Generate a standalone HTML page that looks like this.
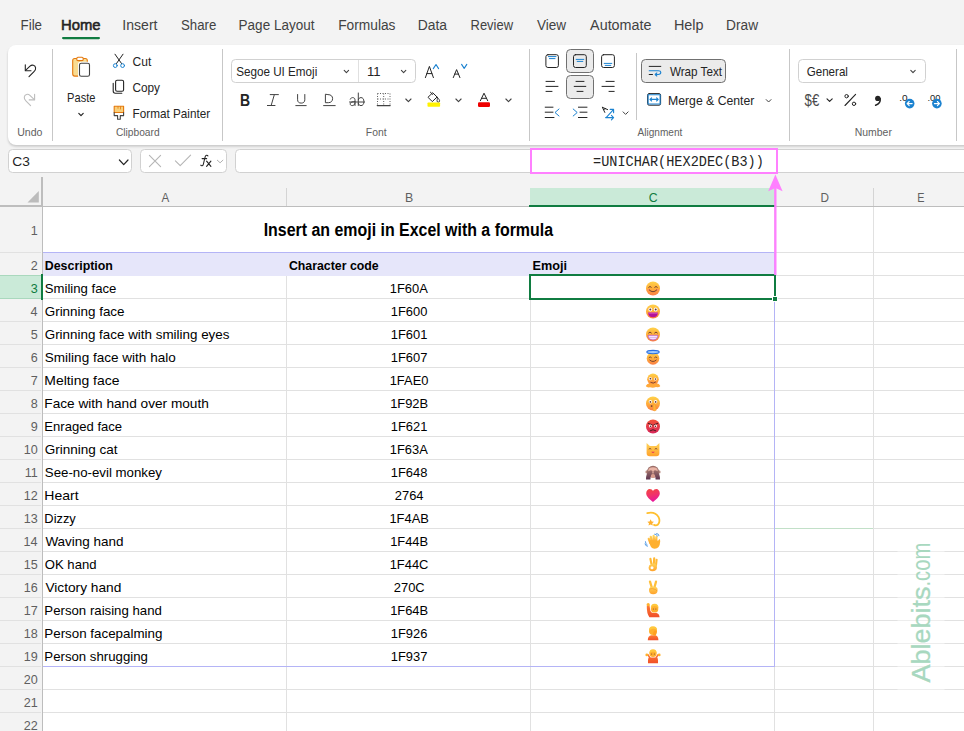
<!DOCTYPE html>
<html><head><meta charset="utf-8"><style>
html,body{margin:0;padding:0;width:964px;height:731px;overflow:hidden;background:#f3f3f3;}
svg{display:block;}
text{white-space:pre;}
</style></head><body>
<svg width="964" height="731" viewBox="0 0 964 731">
<defs>
<filter id="sh" x="-5%" y="-20%" width="110%" height="140%"><feGaussianBlur stdDeviation="0.8"/></filter>
</defs>
<!-- ribbon panel -->
<rect x="8" y="46.6" width="970" height="100" rx="8" fill="#c6c6c6" filter="url(#sh)"/>
<rect x="8" y="45" width="970" height="100" rx="8" fill="#ffffff"/>
<!-- separators -->
<g fill="#c7c7c7">
<rect x="52" y="49" width="1" height="92"/>
<rect x="222" y="49" width="1" height="92"/>
<rect x="529" y="49" width="1" height="92"/>
<rect x="636" y="53" width="1" height="67"/>
<rect x="789" y="49" width="1" height="92"/>
<rect x="956" y="49" width="1" height="92"/>
</g>
<!-- Home underline -->
<rect x="62" y="37" width="38" height="2.2" rx="1.1" fill="#107c41"/>
<!-- font boxes -->
<rect x="231.5" y="59.5" width="184" height="23" rx="4" fill="#fff" stroke="#d1d1d1"/>
<rect x="358" y="60" width="1" height="22" fill="#e0e0e0"/>
<rect x="798.5" y="59.5" width="127" height="23" rx="4" fill="#fff" stroke="#d1d1d1"/>
<!-- wrap text button -->
<rect x="641.5" y="59.5" width="84" height="23" rx="4" fill="#ebebeb" stroke="#707070"/>
<!-- selected align boxes -->
<rect x="566.5" y="49.5" width="27" height="23" rx="4" fill="#ebebeb" stroke="#707070"/>
<rect x="566.5" y="75.5" width="27" height="23" rx="4" fill="#ebebeb" stroke="#707070"/>
<!-- formula bar -->
<rect x="8.5" y="149.5" width="123" height="23" rx="4" fill="#fff" stroke="#d1d1d1"/>
<rect x="140.5" y="149.5" width="86" height="23" rx="4" fill="#fff" stroke="#d1d1d1"/>
<rect x="235.5" y="149.5" width="740" height="23" rx="4" fill="#fff" stroke="#d1d1d1"/>
<!-- sheet cells -->
<rect x="43" y="207" width="921" height="524" fill="#ffffff"/>
<!-- row header separators -->
<g fill="#e1e1e1">
<rect x="0" y="252" width="41" height="1"/>
<rect x="0" y="275" width="41" height="1"/>
<rect x="0" y="298" width="41" height="1"/>
<rect x="0" y="321" width="41" height="1"/>
<rect x="0" y="344" width="41" height="1"/>
<rect x="0" y="367" width="41" height="1"/>
<rect x="0" y="390" width="41" height="1"/>
<rect x="0" y="413" width="41" height="1"/>
<rect x="0" y="436" width="41" height="1"/>
<rect x="0" y="459" width="41" height="1"/>
<rect x="0" y="482" width="41" height="1"/>
<rect x="0" y="505" width="41" height="1"/>
<rect x="0" y="528" width="41" height="1"/>
<rect x="0" y="551" width="41" height="1"/>
<rect x="0" y="574" width="41" height="1"/>
<rect x="0" y="597" width="41" height="1"/>
<rect x="0" y="620" width="41" height="1"/>
<rect x="0" y="643" width="41" height="1"/>
<rect x="0" y="666" width="41" height="1"/>
<rect x="0" y="689" width="41" height="1"/>
<rect x="0" y="712" width="41" height="1"/>
</g>
<!-- cell gridlines -->
<g fill="#e1e1e1">
<rect x="43" y="252" width="921" height="1"/>
<rect x="43" y="275" width="921" height="1"/>
<rect x="43" y="298" width="921" height="1"/>
<rect x="43" y="321" width="921" height="1"/>
<rect x="43" y="344" width="921" height="1"/>
<rect x="43" y="367" width="921" height="1"/>
<rect x="43" y="390" width="921" height="1"/>
<rect x="43" y="413" width="921" height="1"/>
<rect x="43" y="436" width="921" height="1"/>
<rect x="43" y="459" width="921" height="1"/>
<rect x="43" y="482" width="921" height="1"/>
<rect x="43" y="505" width="921" height="1"/>
<rect x="43" y="528" width="921" height="1"/>
<rect x="43" y="551" width="921" height="1"/>
<rect x="43" y="574" width="921" height="1"/>
<rect x="43" y="597" width="921" height="1"/>
<rect x="43" y="620" width="921" height="1"/>
<rect x="43" y="643" width="921" height="1"/>
<rect x="43" y="666" width="921" height="1"/>
<rect x="43" y="689" width="921" height="1"/>
<rect x="43" y="712" width="921" height="1"/>
<rect x="286" y="253" width="1" height="478"/>
<rect x="530" y="253" width="1" height="478"/>
<rect x="774" y="207" width="1" height="524"/>
<rect x="873" y="207" width="1" height="524"/>
</g>
<!-- column header dividers -->
<g fill="#d4d4d4">
<rect x="286" y="188" width="1" height="18"/>
<rect x="530" y="188" width="1" height="18"/>
<rect x="774" y="188" width="1" height="18"/>
<rect x="873" y="188" width="1" height="18"/>
</g>
<!-- C header highlight -->
<rect x="530" y="188" width="244" height="17" fill="#caead8"/>
<!-- header borders -->
<g fill="#bdbdbd">
<rect x="0" y="205" width="42" height="2"/>
<rect x="42" y="206" width="922" height="1"/>
<rect x="41" y="177" width="2" height="30"/>
<rect x="42" y="207" width="1" height="524"/>
</g>
<rect x="529" y="205" width="246" height="2" fill="#107c41"/>
<!-- corner triangle -->
<polygon points="38.8,191 38.8,202.5 27.5,202.5" fill="#bcbcbc"/>
<!-- row 3 header highlight -->
<rect x="0" y="275" width="41" height="24" fill="#caead8"/>
<rect x="0" y="275" width="41" height="1" fill="#a9d8bd"/>
<rect x="0" y="298" width="41" height="1" fill="#a9d8bd"/>
<rect x="41" y="274" width="2" height="26" fill="#107c41"/>
<!-- lavender header row -->
<rect x="43" y="252" width="732" height="24" fill="#e6e6fa"/>
<rect x="43" y="252" width="732" height="1" fill="#b4b4f6"/>
<rect x="43" y="666" width="732" height="1" fill="#b4b4f6"/>
<rect x="774" y="252" width="1" height="415" fill="#b4b4f6"/>
<!-- faint green line D -->
<rect x="775" y="528" width="98" height="1" fill="#c2e0c8"/>
<!-- selection -->
<rect x="529" y="274" width="247" height="2" fill="#107c41"/>
<rect x="529" y="274" width="2" height="26" fill="#107c41"/>
<rect x="529" y="298" width="243" height="2" fill="#107c41"/>
<rect x="774" y="274" width="2" height="22" fill="#107c41"/>
<rect x="772" y="296" width="6" height="6" fill="#ffffff"/>
<rect x="773" y="297" width="4" height="4" fill="#107c41"/>
<!-- pink box + arrow -->
<rect x="531" y="149" width="246" height="24" fill="none" stroke="#ff80ff" stroke-width="2"/>
<rect x="774.2" y="188" width="2.3" height="87" fill="#ff80ff"/>
<polygon points="775.4,174.6 768.2,191.2 775.4,188 782.6,191.2" fill="#ff80ff"/>

<text x="20.53" y="30.00" font-size="14.49" font-family='"Liberation Sans", sans-serif' fill="#424242" textLength="21.52" lengthAdjust="spacingAndGlyphs">File</text>
<text x="122.33" y="30.00" font-size="14.49" font-family='"Liberation Sans", sans-serif' fill="#424242" textLength="35.21" lengthAdjust="spacingAndGlyphs">Insert</text>
<text x="181.00" y="30.00" font-size="14.49" font-family='"Liberation Sans", sans-serif' fill="#424242" textLength="35.34" lengthAdjust="spacingAndGlyphs">Share</text>
<text x="238.62" y="30.00" font-size="14.49" font-family='"Liberation Sans", sans-serif' fill="#424242" textLength="75.82" lengthAdjust="spacingAndGlyphs">Page Layout</text>
<text x="338.20" y="30.00" font-size="14.49" font-family='"Liberation Sans", sans-serif' fill="#424242" textLength="57.28" lengthAdjust="spacingAndGlyphs">Formulas</text>
<text x="417.79" y="30.00" font-size="14.49" font-family='"Liberation Sans", sans-serif' fill="#424242" textLength="29.25" lengthAdjust="spacingAndGlyphs">Data</text>
<text x="470.56" y="30.00" font-size="14.49" font-family='"Liberation Sans", sans-serif' fill="#424242" textLength="42.50" lengthAdjust="spacingAndGlyphs">Review</text>
<text x="537.00" y="30.00" font-size="14.49" font-family='"Liberation Sans", sans-serif' fill="#424242" textLength="29.16" lengthAdjust="spacingAndGlyphs">View</text>
<text x="590.10" y="30.00" font-size="14.49" font-family='"Liberation Sans", sans-serif' fill="#424242" textLength="61.39" lengthAdjust="spacingAndGlyphs">Automate</text>
<text x="673.95" y="30.00" font-size="14.49" font-family='"Liberation Sans", sans-serif' fill="#424242" textLength="29.65" lengthAdjust="spacingAndGlyphs">Help</text>
<text x="726.10" y="30.00" font-size="14.49" font-family='"Liberation Sans", sans-serif' fill="#424242" textLength="31.96" lengthAdjust="spacingAndGlyphs">Draw</text>
<text x="61.01" y="30.00" font-size="14.49" font-family='"Liberation Sans", sans-serif' fill="#242424" textLength="39.60" lengthAdjust="spacingAndGlyphs" stroke="#242424" stroke-width="0.55">Home</text>
<text x="67.11" y="101.70" font-size="12.03" font-family='"Liberation Sans", sans-serif' fill="#242424" textLength="28.34" lengthAdjust="spacingAndGlyphs">Paste</text>
<text x="132.60" y="65.80" font-size="12.03" font-family='"Liberation Sans", sans-serif' fill="#242424" textLength="18.74" lengthAdjust="spacingAndGlyphs">Cut</text>
<text x="132.41" y="91.50" font-size="12.03" font-family='"Liberation Sans", sans-serif' fill="#242424" textLength="27.59" lengthAdjust="spacingAndGlyphs">Copy</text>
<text x="132.56" y="117.50" font-size="12.03" font-family='"Liberation Sans", sans-serif' fill="#242424" textLength="77.59" lengthAdjust="spacingAndGlyphs">Format Painter</text>
<text x="17.21" y="136.00" font-size="10.43" font-family='"Liberation Sans", sans-serif' fill="#616161" textLength="25.23" lengthAdjust="spacingAndGlyphs">Undo</text>
<text x="115.89" y="136.00" font-size="10.43" font-family='"Liberation Sans", sans-serif' fill="#616161" textLength="43.74" lengthAdjust="spacingAndGlyphs">Clipboard</text>
<text x="365.87" y="135.60" font-size="10.43" font-family='"Liberation Sans", sans-serif' fill="#616161" textLength="20.76" lengthAdjust="spacingAndGlyphs">Font</text>
<text x="637.50" y="135.50" font-size="10.43" font-family='"Liberation Sans", sans-serif' fill="#616161" textLength="44.83" lengthAdjust="spacingAndGlyphs">Alignment</text>
<text x="854.76" y="135.80" font-size="10.43" font-family='"Liberation Sans", sans-serif' fill="#616161" textLength="37.17" lengthAdjust="spacingAndGlyphs">Number</text>
<text x="236.17" y="75.70" font-size="12.03" font-family='"Liberation Sans", sans-serif' fill="#242424" textLength="81.11" lengthAdjust="spacingAndGlyphs">Segoe UI Emoji</text>
<text x="367.02" y="76.00" font-size="12.03" font-family='"Liberation Sans", sans-serif' fill="#242424" textLength="13.59" lengthAdjust="spacingAndGlyphs">11</text>
<text x="669.90" y="75.70" font-size="12.03" font-family='"Liberation Sans", sans-serif' fill="#242424" textLength="52.13" lengthAdjust="spacingAndGlyphs">Wrap Text</text>
<text x="668.02" y="104.80" font-size="12.03" font-family='"Liberation Sans", sans-serif' fill="#242424" textLength="86.34" lengthAdjust="spacingAndGlyphs">Merge &amp; Center</text>
<text x="806.72" y="76.00" font-size="12.03" font-family='"Liberation Sans", sans-serif' fill="#242424" textLength="41.20" lengthAdjust="spacingAndGlyphs">General</text>
<text x="12.31" y="165.60" font-size="13.33" font-family='"Liberation Sans", sans-serif' fill="#242424" textLength="17.55" lengthAdjust="spacingAndGlyphs">C3</text>
<text x="593.05" y="165.80" font-size="14.18" font-family='"Liberation Mono", monospace' fill="#242424" textLength="170.78" lengthAdjust="spacingAndGlyphs">=UNICHAR(HEX2DEC(B3))</text>
<text x="239.99" y="105.80" font-size="16.43" font-family='"Liberation Sans", sans-serif' font-weight="bold" fill="#242424" textLength="10.10" lengthAdjust="spacingAndGlyphs">B</text>
<text x="804.57" y="105.90" font-size="15.94" font-family='"Liberation Sans", sans-serif' fill="#4a4a4a" textLength="14.68" lengthAdjust="spacingAndGlyphs">$€</text>
<text x="161.50" y="201.80" font-size="12.61" font-family='"Liberation Sans", sans-serif' fill="#5f5f5f" textLength="7.76" lengthAdjust="spacingAndGlyphs">A</text>
<text x="405.11" y="201.80" font-size="12.61" font-family='"Liberation Sans", sans-serif' fill="#5f5f5f" textLength="8.23" lengthAdjust="spacingAndGlyphs">B</text>
<text x="648.69" y="201.80" font-size="12.61" font-family='"Liberation Sans", sans-serif' fill="#107c41" textLength="8.87" lengthAdjust="spacingAndGlyphs">C</text>
<text x="820.56" y="201.80" font-size="12.61" font-family='"Liberation Sans", sans-serif' fill="#5f5f5f" textLength="8.50" lengthAdjust="spacingAndGlyphs">D</text>
<text x="917.13" y="201.80" font-size="12.61" font-family='"Liberation Sans", sans-serif' fill="#5f5f5f" textLength="7.22" lengthAdjust="spacingAndGlyphs">E</text>
<text x="263.66" y="236.00" font-size="19.14" font-family='"Liberation Sans", sans-serif' font-weight="bold" fill="#000" textLength="289.39" lengthAdjust="spacingAndGlyphs">Insert an emoji in Excel with a formula</text>
<text x="44.79" y="270.00" font-size="13.43" font-family='"Liberation Sans", sans-serif' font-weight="bold" fill="#000" textLength="68.16" lengthAdjust="spacingAndGlyphs">Description</text>
<text x="288.91" y="270.00" font-size="13.43" font-family='"Liberation Sans", sans-serif' font-weight="bold" fill="#000" textLength="89.78" lengthAdjust="spacingAndGlyphs">Character code</text>
<text x="532.48" y="270.00" font-size="13.43" font-family='"Liberation Sans", sans-serif' font-weight="bold" fill="#000" textLength="34.48" lengthAdjust="spacingAndGlyphs">Emoji</text>
<text x="44.81" y="293.30" font-size="13.62" font-family='"Liberation Sans", sans-serif' fill="#000" textLength="71.63" lengthAdjust="spacingAndGlyphs">Smiling face</text>
<text x="389.78" y="293.30" font-size="13.62" font-family='"Liberation Sans", sans-serif' fill="#000" textLength="38.03" lengthAdjust="spacingAndGlyphs">1F60A</text>
<text x="44.73" y="316.30" font-size="13.62" font-family='"Liberation Sans", sans-serif' fill="#000" textLength="79.82" lengthAdjust="spacingAndGlyphs">Grinning face</text>
<text x="390.75" y="316.30" font-size="13.62" font-family='"Liberation Sans", sans-serif' fill="#000" textLength="36.60" lengthAdjust="spacingAndGlyphs">1F600</text>
<text x="44.73" y="339.30" font-size="13.62" font-family='"Liberation Sans", sans-serif' fill="#000" textLength="184.74" lengthAdjust="spacingAndGlyphs">Grinning face with smiling eyes</text>
<text x="390.81" y="339.30" font-size="13.62" font-family='"Liberation Sans", sans-serif' fill="#000" textLength="36.60" lengthAdjust="spacingAndGlyphs">1F601</text>
<text x="44.79" y="362.30" font-size="13.62" font-family='"Liberation Sans", sans-serif' fill="#000" textLength="130.97" lengthAdjust="spacingAndGlyphs">Smiling face with halo</text>
<text x="390.81" y="362.30" font-size="13.62" font-family='"Liberation Sans", sans-serif' fill="#000" textLength="36.60" lengthAdjust="spacingAndGlyphs">1F607</text>
<text x="44.28" y="385.30" font-size="13.62" font-family='"Liberation Sans", sans-serif' fill="#000" textLength="75.19" lengthAdjust="spacingAndGlyphs">Melting face</text>
<text x="389.68" y="385.30" font-size="13.62" font-family='"Liberation Sans", sans-serif' fill="#000" textLength="38.75" lengthAdjust="spacingAndGlyphs">1FAE0</text>
<text x="44.31" y="408.30" font-size="13.62" font-family='"Liberation Sans", sans-serif' fill="#000" textLength="164.53" lengthAdjust="spacingAndGlyphs">Face with hand over mouth</text>
<text x="390.14" y="408.30" font-size="13.62" font-family='"Liberation Sans", sans-serif' fill="#000" textLength="38.03" lengthAdjust="spacingAndGlyphs">1F92B</text>
<text x="44.35" y="431.30" font-size="13.62" font-family='"Liberation Sans", sans-serif' fill="#000" textLength="77.78" lengthAdjust="spacingAndGlyphs">Enraged face</text>
<text x="390.81" y="431.30" font-size="13.62" font-family='"Liberation Sans", sans-serif' fill="#000" textLength="36.60" lengthAdjust="spacingAndGlyphs">1F621</text>
<text x="44.72" y="454.30" font-size="13.62" font-family='"Liberation Sans", sans-serif' fill="#000" textLength="72.91" lengthAdjust="spacingAndGlyphs">Grinning cat</text>
<text x="389.78" y="454.30" font-size="13.62" font-family='"Liberation Sans", sans-serif' fill="#000" textLength="38.03" lengthAdjust="spacingAndGlyphs">1F63A</text>
<text x="44.80" y="477.30" font-size="13.62" font-family='"Liberation Sans", sans-serif' fill="#000" textLength="117.20" lengthAdjust="spacingAndGlyphs">See-no-evil monkey</text>
<text x="390.78" y="477.30" font-size="13.62" font-family='"Liberation Sans", sans-serif' fill="#000" textLength="36.60" lengthAdjust="spacingAndGlyphs">1F648</text>
<text x="44.28" y="500.30" font-size="13.62" font-family='"Liberation Sans", sans-serif' fill="#000" textLength="34.26" lengthAdjust="spacingAndGlyphs">Heart</text>
<text x="394.79" y="500.30" font-size="13.62" font-family='"Liberation Sans", sans-serif' fill="#000" textLength="28.71" lengthAdjust="spacingAndGlyphs">2764</text>
<text x="44.37" y="523.30" font-size="13.62" font-family='"Liberation Sans", sans-serif' fill="#000" textLength="31.43" lengthAdjust="spacingAndGlyphs">Dizzy</text>
<text x="389.42" y="523.30" font-size="13.62" font-family='"Liberation Sans", sans-serif' fill="#000" textLength="39.46" lengthAdjust="spacingAndGlyphs">1F4AB</text>
<text x="45.40" y="546.30" font-size="13.62" font-family='"Liberation Sans", sans-serif' fill="#000" textLength="78.22" lengthAdjust="spacingAndGlyphs">Waving hand</text>
<text x="390.14" y="546.30" font-size="13.62" font-family='"Liberation Sans", sans-serif' fill="#000" textLength="38.03" lengthAdjust="spacingAndGlyphs">1F44B</text>
<text x="44.81" y="569.30" font-size="13.62" font-family='"Liberation Sans", sans-serif' fill="#000" textLength="51.69" lengthAdjust="spacingAndGlyphs">OK hand</text>
<text x="389.69" y="569.30" font-size="13.62" font-family='"Liberation Sans", sans-serif' fill="#000" textLength="38.74" lengthAdjust="spacingAndGlyphs">1F44C</text>
<text x="45.40" y="592.30" font-size="13.62" font-family='"Liberation Sans", sans-serif' fill="#000" textLength="75.94" lengthAdjust="spacingAndGlyphs">Victory hand</text>
<text x="393.79" y="592.30" font-size="13.62" font-family='"Liberation Sans", sans-serif' fill="#000" textLength="30.86" lengthAdjust="spacingAndGlyphs">270C</text>
<text x="44.34" y="615.30" font-size="13.62" font-family='"Liberation Sans", sans-serif' fill="#000" textLength="117.57" lengthAdjust="spacingAndGlyphs">Person raising hand</text>
<text x="390.14" y="615.30" font-size="13.62" font-family='"Liberation Sans", sans-serif' fill="#000" textLength="38.03" lengthAdjust="spacingAndGlyphs">1F64B</text>
<text x="44.33" y="638.30" font-size="13.62" font-family='"Liberation Sans", sans-serif' fill="#000" textLength="118.09" lengthAdjust="spacingAndGlyphs">Person facepalming</text>
<text x="390.78" y="638.30" font-size="13.62" font-family='"Liberation Sans", sans-serif' fill="#000" textLength="36.60" lengthAdjust="spacingAndGlyphs">1F926</text>
<text x="44.34" y="661.30" font-size="13.62" font-family='"Liberation Sans", sans-serif' fill="#000" textLength="103.56" lengthAdjust="spacingAndGlyphs">Person shrugging</text>
<text x="390.81" y="661.30" font-size="13.62" font-family='"Liberation Sans", sans-serif' fill="#000" textLength="36.60" lengthAdjust="spacingAndGlyphs">1F937</text>
<text x="30.87" y="234.50" font-size="12.61" font-family='"Liberation Sans", sans-serif' fill="#5f5f5f" textLength="7.01" lengthAdjust="spacingAndGlyphs">1</text>
<text x="30.87" y="270.00" font-size="12.61" font-family='"Liberation Sans", sans-serif' fill="#5f5f5f" textLength="7.01" lengthAdjust="spacingAndGlyphs">2</text>
<text x="30.81" y="292.90" font-size="12.61" font-family='"Liberation Sans", sans-serif' fill="#107c41" textLength="7.01" lengthAdjust="spacingAndGlyphs">3</text>
<text x="30.62" y="315.90" font-size="12.61" font-family='"Liberation Sans", sans-serif' fill="#5f5f5f" textLength="7.01" lengthAdjust="spacingAndGlyphs">4</text>
<text x="30.81" y="338.90" font-size="12.61" font-family='"Liberation Sans", sans-serif' fill="#5f5f5f" textLength="7.01" lengthAdjust="spacingAndGlyphs">5</text>
<text x="30.81" y="361.90" font-size="12.61" font-family='"Liberation Sans", sans-serif' fill="#5f5f5f" textLength="7.01" lengthAdjust="spacingAndGlyphs">6</text>
<text x="30.87" y="384.90" font-size="12.61" font-family='"Liberation Sans", sans-serif' fill="#5f5f5f" textLength="7.01" lengthAdjust="spacingAndGlyphs">7</text>
<text x="30.81" y="407.90" font-size="12.61" font-family='"Liberation Sans", sans-serif' fill="#5f5f5f" textLength="7.01" lengthAdjust="spacingAndGlyphs">8</text>
<text x="30.87" y="430.90" font-size="12.61" font-family='"Liberation Sans", sans-serif' fill="#5f5f5f" textLength="7.01" lengthAdjust="spacingAndGlyphs">9</text>
<text x="23.73" y="453.90" font-size="12.61" font-family='"Liberation Sans", sans-serif' fill="#5f5f5f" textLength="14.02" lengthAdjust="spacingAndGlyphs">10</text>
<text x="24.79" y="476.90" font-size="12.61" font-family='"Liberation Sans", sans-serif' fill="#5f5f5f" textLength="13.09" lengthAdjust="spacingAndGlyphs">11</text>
<text x="23.86" y="499.90" font-size="12.61" font-family='"Liberation Sans", sans-serif' fill="#5f5f5f" textLength="14.02" lengthAdjust="spacingAndGlyphs">12</text>
<text x="23.79" y="522.90" font-size="12.61" font-family='"Liberation Sans", sans-serif' fill="#5f5f5f" textLength="14.02" lengthAdjust="spacingAndGlyphs">13</text>
<text x="23.61" y="545.90" font-size="12.61" font-family='"Liberation Sans", sans-serif' fill="#5f5f5f" textLength="14.02" lengthAdjust="spacingAndGlyphs">14</text>
<text x="23.79" y="568.90" font-size="12.61" font-family='"Liberation Sans", sans-serif' fill="#5f5f5f" textLength="14.02" lengthAdjust="spacingAndGlyphs">15</text>
<text x="23.79" y="591.90" font-size="12.61" font-family='"Liberation Sans", sans-serif' fill="#5f5f5f" textLength="14.02" lengthAdjust="spacingAndGlyphs">16</text>
<text x="23.86" y="614.90" font-size="12.61" font-family='"Liberation Sans", sans-serif' fill="#5f5f5f" textLength="14.02" lengthAdjust="spacingAndGlyphs">17</text>
<text x="23.79" y="637.90" font-size="12.61" font-family='"Liberation Sans", sans-serif' fill="#5f5f5f" textLength="14.02" lengthAdjust="spacingAndGlyphs">18</text>
<text x="23.86" y="660.90" font-size="12.61" font-family='"Liberation Sans", sans-serif' fill="#5f5f5f" textLength="14.02" lengthAdjust="spacingAndGlyphs">19</text>
<text x="23.73" y="683.90" font-size="12.61" font-family='"Liberation Sans", sans-serif' fill="#5f5f5f" textLength="14.02" lengthAdjust="spacingAndGlyphs">20</text>
<text x="23.86" y="706.90" font-size="12.61" font-family='"Liberation Sans", sans-serif' fill="#5f5f5f" textLength="14.02" lengthAdjust="spacingAndGlyphs">21</text>
<text x="23.86" y="729.90" font-size="12.61" font-family='"Liberation Sans", sans-serif' fill="#5f5f5f" textLength="14.02" lengthAdjust="spacingAndGlyphs">22</text>
<!-- ===== Icons ===== -->
<g fill="none" stroke-linecap="round" stroke-linejoin="round">
<!-- undo -->
<path d="M25.3 64.8 V70.7 H31" stroke="#242424" stroke-width="1.1"/>
<path d="M25.8 70.2 L30 66.2 C32 64.3 35.2 65 35.6 67.8 C35.9 69.6 35 70.6 34 71.6 L29 76.6" stroke="#242424" stroke-width="1.1"/>
<!-- redo -->
<path d="M34.6 94.3 V99.9 H29.2" stroke="#bdbdbd" stroke-width="1.1"/>
<path d="M34.1 99.4 L29.9 95.4 C27.9 93.5 24.7 94.2 24.3 97 C24 98.8 24.9 99.8 25.9 100.8 L30.6 105.6" stroke="#bdbdbd" stroke-width="1.1"/>
<!-- paste clipboard -->
<rect x="72.7" y="58.5" width="14.6" height="17.6" rx="2" fill="#f8dc92" stroke="#e4780c" stroke-width="1.1"/>
<rect x="76.8" y="57.2" width="6.4" height="3.4" rx="1.2" fill="#fff" stroke="#e4780c" stroke-width="1.1"/>
<rect x="78.6" y="62.4" width="12" height="15" rx="2" fill="#fff" stroke="#ffffff" stroke-width="1.2"/>
<rect x="79.5" y="63.3" width="10" height="13" rx="1.8" fill="#fff" stroke="#424242" stroke-width="1.1"/>
<!-- cut -->
<path d="M115 54.2 L121.6 63.6 M123 54.2 L116.4 63.6" stroke="#242424" stroke-width="1"/>
<circle cx="115.3" cy="65.6" r="1.9" stroke="#1b82d0" stroke-width="1"/>
<circle cx="122.6" cy="65.6" r="1.9" stroke="#1b82d0" stroke-width="1"/>
<!-- copy -->
<rect x="115.6" y="80.3" width="8" height="10.9" rx="1.5" stroke="#242424" stroke-width="1.1"/>
<path d="M113.2 83.2 V91 C113.2 92.3 114 93.2 115.3 93.2 H121.8" stroke="#242424" stroke-width="1.1"/>
<!-- format painter -->
<rect x="114.2" y="106.3" width="9.4" height="6.2" fill="#f8cf7a" stroke="#e4780c" stroke-width="1.1"/>
<path d="M114.2 112.5 V115.6 H117.6 V119.3 H120.3 V115.6 H123.6 V112.5" stroke="#424242" stroke-width="1.1"/>
<path d="M118 106.5 V108.3 M120.5 106.5 V109" stroke="#e4780c" stroke-width="0.8"/>
<!-- paste chevron -->
<path d="M78.8 113.4 L81 115.6 L83.2 113.4" stroke="#242424" stroke-width="1.2"/>
<!-- font chevrons -->
<path d="M344.2 70.4 L346.4 72.6 L348.6 70.4" stroke="#424242" stroke-width="1.1"/>
<path d="M401.4 70.4 L403.6 72.6 L405.8 70.4" stroke="#424242" stroke-width="1.1"/>
<path d="M910.8 70.4 L913 72.6 L915.2 70.4" stroke="#424242" stroke-width="1.1"/>
<!-- italic I -->
<path d="M270.2 94.6 H278.4 M267.4 105.5 H275 M274.3 94.8 L271.2 105.3" stroke="#424242" stroke-width="1"/>
<!-- U -->
<path d="M297.6 94.5 V99.8 C297.6 102 299 103.1 301.2 103.1 C303.4 103.1 304.8 102 304.8 99.8 V94.5" stroke="#424242" stroke-width="1"/>
<path d="M295.8 105.6 H306.2" stroke="#424242" stroke-width="1"/>
<!-- D double -->
<path d="M325.4 94.6 V102.7 H328.3 C331 102.7 332.6 101.1 332.6 98.65 C332.6 96.2 331 94.6 328.3 94.6 Z" stroke="#424242" stroke-width="1"/>
<path d="M323.6 105.6 H335.2" stroke="#424242" stroke-width="1"/>
<!-- strikethrough ab -->
<path d="M349.5 102 H364.6" stroke="#424242" stroke-width="1"/>
<path d="M350.3 99.2 C350.8 98 351.6 97.6 352.6 97.6 C354 97.6 355 98.4 355 99.8 V105.5 M355 101.6 C353 101.6 350.2 101.9 350.2 103.8 C350.2 105 351 105.6 352.2 105.6 C353.6 105.6 355 104.6 355 103" stroke="#424242" stroke-width="1"/>
<path d="M358.3 93 V105.5 M358.3 99.8 C358.6 98.4 359.6 97.6 361 97.6 C362.8 97.6 363.9 99 363.9 101.6 C363.9 104.2 362.8 105.6 361 105.6 C359.6 105.6 358.6 104.8 358.3 103.4" stroke="#424242" stroke-width="1"/>
<!-- borders -->
<path d="M377.5 93.5 H390 M377.5 99 H390 M377.5 93.5 V104.5 M383.7 93.5 V104.5 M390 93.5 V104.5" stroke="#616161" stroke-width="1" stroke-dasharray="1 1.5" stroke-linecap="butt"/>
<path d="M377.2 105.6 H390.2" stroke="#424242" stroke-width="1.1"/>
<!-- chevrons font row 2 -->
<path d="M405.8 99 L408.4 101.6 L411 99" stroke="#424242" stroke-width="1.1"/>
<path d="M455.9 99 L458.5 101.6 L461.1 99" stroke="#424242" stroke-width="1.1"/>
<path d="M505.9 99 L508.5 101.6 L511.1 99" stroke="#424242" stroke-width="1.1"/>
<!-- fill bucket -->
<path d="M432.4 93 L428 97.3 L432.3 101.6 L436.8 97.3 Z M430.4 92.2 L432.6 94.4" stroke="#242424" stroke-width="1"/>
<path d="M437.5 97.5 C438.8 99 439.6 100 439.6 100.9 C439.6 101.7 438.9 102.2 438.3 102.2 C437.6 102.2 437 101.7 437 100.9 C437 100 437.6 99 437.5 97.5 Z" stroke="#242424" stroke-width="0.9"/>
<rect x="427.5" y="102.5" width="12.6" height="4.2" rx="0.8" fill="#fff200" stroke="none"/>
<!-- font color A -->
<path d="M480.4 100.7 L484 93.2 L487.7 100.7 M481.6 98.3 H486.5" stroke="#242424" stroke-width="1"/>
<rect x="478" y="102.3" width="12" height="4.7" rx="1.2" fill="#ee0000" stroke="none"/>
<!-- grow / shrink font -->
<path d="M425.4 77.6 L429.4 66.4 L433.4 77.6 M426.9 73.6 H431.9" stroke="#242424" stroke-width="1"/>
<path d="M433.3 68.6 L436 64.5 L438.6 68.6" stroke="#1b82d0" stroke-width="1.1"/>
<path d="M453.3 77.6 L456.6 69.6 L459.9 77.6 M454.6 74.1 H458.6" stroke="#242424" stroke-width="1"/>
<path d="M461.6 64.4 L464.2 68.4 L466.8 64.4" stroke="#1b82d0" stroke-width="1.1"/>
<!-- alignment icons row 1 -->
<rect x="545.9" y="54.7" width="12.5" height="12.8" rx="2" stroke="#242424" stroke-width="1"/>
<path d="M548.4 56.6 H556 M549.4 58.6 H555" stroke="#1b82d0" stroke-width="1"/>
<rect x="573.5" y="54.7" width="12.8" height="12.8" rx="2" stroke="#242424" stroke-width="1" fill="#ebebeb"/>
<path d="M576.2 59.4 H583.8 M577.2 61.4 H582.8" stroke="#1b82d0" stroke-width="1"/>
<rect x="601.6" y="54.7" width="12.8" height="12.8" rx="2" stroke="#242424" stroke-width="1"/>
<path d="M604.2 63.4 H611.8 M605.2 65.4 H610.8" stroke="#1b82d0" stroke-width="1"/>
<!-- alignment row 2 -->
<path d="M546 81.4 H554.5 M546 86.4 H558 M546 91.4 H552" stroke="#242424" stroke-width="1"/>
<path d="M576 81.4 H584 M574.2 86.4 H585.8 M577 91.4 H583" stroke="#242424" stroke-width="1"/>
<path d="M606 81.4 H614.2 M602 86.4 H614.2 M609 91.4 H614.2" stroke="#242424" stroke-width="1"/>
<!-- row 3 indent -->
<path d="M545.2 107.2 H553 M545.2 112.2 H553 M545.2 117.5 H554" stroke="#242424" stroke-width="1"/>
<path d="M559 109 L555 112.5 L559 116" stroke="#1b82d0" stroke-width="1"/>
<path d="M573.2 109 L577.2 112.5 L573.2 116" stroke="#1b82d0" stroke-width="1"/>
<path d="M578.4 107.2 H587 M580 112.2 H587 M578.4 117.5 H587" stroke="#242424" stroke-width="1"/>
<!-- orientation -->
<path d="M602.4 107.3 L607.6 109.6 M602.4 107.3 L604.8 112.4 M603.4 109.6 L605.6 108.6" stroke="#242424" stroke-width="1"/>
<path d="M606.4 117.4 L613.4 109.6 M610.2 109.4 H613.6 V112.8 M605.6 117.6 H613.6 M611.4 115.4 L613.6 117.6 L611.4 119.8" stroke="#1b82d0" stroke-width="1.1"/>
<path d="M623.1 111.9 L625.6 114.4 L628.1 111.9" stroke="#424242" stroke-width="1"/>
<!-- wrap text icon -->
<path d="M649.2 66.4 H660.8 M649.2 74.5 H652.5" stroke="#242424" stroke-width="1"/>
<path d="M649.2 70.7 H658.2 C659.8 70.7 660.8 71.6 660.8 72.6 C660.8 73.7 659.8 74.5 658.2 74.5 H655.3 M656.8 73 L655.2 74.5 L656.8 76" stroke="#1b82d0" stroke-width="1.1"/>
<!-- merge icon -->
<rect x="647.6" y="93.6" width="13" height="11.6" rx="1.6" stroke="#242424" stroke-width="1"/>
<rect x="648.1" y="94.8" width="12" height="9.2" stroke="#1b82d0" stroke-width="1.1"/>
<path d="M650 99.4 H658.2 M651.6 97.8 L650 99.4 L651.6 101 M656.6 97.8 L658.2 99.4 L656.6 101" stroke="#1b82d0" stroke-width="1.1"/>
<path d="M766.2 99.6 L768.6 102 L771 99.6" stroke="#424242" stroke-width="1"/>
<!-- number chevron -->
<path d="M827 98.8 L829.6 101.4 L832.2 98.8" stroke="#242424" stroke-width="1.15"/>
<!-- percent -->
<path d="M845 105.5 L855.6 94.4" stroke="#242424" stroke-width="1.1"/>
<circle cx="846.6" cy="96.2" r="1.7" stroke="#242424" stroke-width="1"/>
<circle cx="854" cy="103.8" r="1.7" stroke="#242424" stroke-width="1"/>
<!-- name box chevron -->
<path d="M119.4 160 L123.7 164.6 L128 160" stroke="#242424" stroke-width="1.2"/>
<!-- X check fx -->
<path d="M149.4 155.4 L160.6 166.6 M160.6 155.4 L149.4 166.6" stroke="#b5b5b5" stroke-width="1.1"/>
<path d="M175.4 160.8 L180.2 165.6 L190.6 155.2" stroke="#b5b5b5" stroke-width="1.1"/>
<path d="M217.3 160.2 L220.1 162.8 L222.9 160.2" stroke="#b0b0b0" stroke-width="1"/>
</g>
<!-- comma -->
<circle cx="877.8" cy="98.4" r="2.7" fill="#242424"/>
<path d="M880.2 98.6 C880.6 101.5 879 104 875.6 105.2" stroke="#242424" stroke-width="1.5" fill="none" stroke-linecap="round"/>
<!-- .0 / .00 -->
<text x="899.2" y="100.6" font-size="9" font-family='"Liberation Sans", sans-serif' fill="#242424" textLength="8.4" lengthAdjust="spacingAndGlyphs">.0</text>
<circle cx="909.7" cy="103.6" r="4.8" fill="#1b82d0"/>
<path d="M912.2 103.6 H907.2 M909.2 101.5 L907.1 103.6 L909.2 105.7" stroke="#fff" stroke-width="1.1" fill="none" stroke-linecap="round" stroke-linejoin="round"/>
<text x="927.4" y="100.6" font-size="9" font-family='"Liberation Sans", sans-serif' fill="#242424" textLength="13" lengthAdjust="spacingAndGlyphs">.00</text>
<circle cx="936.9" cy="103.6" r="4.8" fill="#1b82d0"/>
<path d="M934.4 103.6 H939.4 M937.4 101.5 L939.5 103.6 L937.4 105.7" stroke="#fff" stroke-width="1.1" fill="none" stroke-linecap="round" stroke-linejoin="round"/>
<!-- fx -->
<path d="M208 155.9 C207.4 154.9 205.8 154.8 205.2 156.6 L203.3 164.3 C202.9 165.8 201.6 166.2 200.7 165.2 M202.1 158.6 H206.7" fill="none" stroke="#242424" stroke-width="1.05" stroke-linecap="round"/>
<path d="M206.6 161.1 L210.9 166.3 M210.9 161.1 L206.6 166.3" fill="none" stroke="#242424" stroke-width="1.15" stroke-linecap="round"/>

<defs>
<linearGradient id="gf" x1="0" y1="0" x2="0" y2="1"><stop offset="0" stop-color="#ffd24a"/><stop offset="0.5" stop-color="#ffae3a"/><stop offset="1" stop-color="#fb7e45"/></linearGradient>
<linearGradient id="gr" x1="0" y1="0" x2="0" y2="1"><stop offset="0" stop-color="#f4523a"/><stop offset="1" stop-color="#d8275a"/></linearGradient>
<linearGradient id="gh" x1="0" y1="0" x2="0.3" y2="1"><stop offset="0" stop-color="#f5473f"/><stop offset="0.55" stop-color="#f0326a"/><stop offset="1" stop-color="#e9189a"/></linearGradient>
<linearGradient id="gy" x1="0" y1="0" x2="0" y2="1"><stop offset="0" stop-color="#ffd45a"/><stop offset="1" stop-color="#ffa22c"/></linearGradient>
<linearGradient id="gs" x1="0" y1="0" x2="0" y2="1"><stop offset="0" stop-color="#ff7a33"/><stop offset="1" stop-color="#f0502a"/></linearGradient>
<linearGradient id="gm" x1="0" y1="0" x2="0" y2="1"><stop offset="0" stop-color="#9c6f6a"/><stop offset="1" stop-color="#5e3550"/></linearGradient>
</defs>
<g transform="translate(653 288.5)"><circle r="7" fill="url(#gf)"/><ellipse cx="-4.4" cy="1.2" rx="1.5" ry="1" fill="#ff7f6e" opacity="0.55"/><ellipse cx="4.4" cy="1.2" rx="1.5" ry="1" fill="#ff7f6e" opacity="0.55"/>
<path d="M-4.3 -1.3 Q-3 -3 -1.7 -1.3 M1.7 -1.3 Q3 -3 4.3 -1.3 M-3.7 1.5 Q0 5.2 3.7 1.5" fill="none" stroke="#6b3b2e" stroke-width="0.95" stroke-linecap="round"/></g>
<g transform="translate(653 311.5)"><circle r="7" fill="url(#gf)"/><circle cx="-2.7" cy="-2" r="1.9" fill="#fff"/><circle cx="2.7" cy="-2" r="1.9" fill="#fff"/><circle cx="-2.7" cy="-2" r="1" fill="#6b3b2e"/><circle cx="2.7" cy="-2" r="1" fill="#6b3b2e"/>
<path d="M-4.9 0.9 H4.9 Q4.6 5.8 0 5.8 Q-4.6 5.8 -4.9 0.9 Z" fill="#b4129a"/><path d="M-4.6 0.9 H4.6 Q4.5 2 4.2 2.2 H-4.2 Q-4.5 2 -4.6 0.9Z" fill="#e070d8" opacity="0.6"/></g>
<g transform="translate(653 334.5)"><circle r="7" fill="url(#gf)"/><path d="M-4.4 -1.6 Q-3 -3.6 -1.6 -1.6 M1.6 -1.6 Q3 -3.6 4.4 -1.6" fill="none" stroke="#6b3b2e" stroke-width="0.95" stroke-linecap="round"/>
<path d="M-5 0.8 H5 Q4.8 5.4 0 5.4 Q-4.8 5.4 -5 0.8 Z" fill="#f3e2ff" stroke="#b14bbd" stroke-width="0.7"/><path d="M-4.6 3 H4.6" stroke="#c890d8" stroke-width="0.5"/></g>
<g transform="translate(653 357.5)"><circle cy="0.9" r="6.3" fill="url(#gf)"/><ellipse cy="-5.4" rx="6.2" ry="1.7" fill="#9ccaff" stroke="#2a6fe0" stroke-width="1.1"/>
<path d="M-4 0 Q-2.8 -1.5 -1.6 0 M1.6 0 Q2.8 -1.5 4 0 M-3.2 2.6 Q0 5.6 3.2 2.6" fill="none" stroke="#6b3b2e" stroke-width="0.9" stroke-linecap="round"/></g>
<g transform="translate(653 380.5)"><circle cy="-1.2" r="5.8" fill="url(#gf)"/><path d="M-7.2 5.6 Q-6 3 -4 3 H4 Q6 3 7.3 5.4 Q6.5 7 3 6.6 Q0 7.6 -3 6.8 Q-6.5 7.2 -7.2 5.6Z" fill="#ffa93a"/>
<circle cx="-2.7" cy="-1.8" r="1.6" fill="#fff"/><circle cx="2.3" cy="-1.4" r="1.5" fill="#fff"/><circle cx="-2.6" cy="-1.8" r="0.85" fill="#6b3b2e"/><circle cx="2.4" cy="-1.4" r="0.8" fill="#6b3b2e"/>
<path d="M-2.2 2 Q0.3 3.6 2.6 1.6" fill="none" stroke="#6b3b2e" stroke-width="0.85" stroke-linecap="round"/></g>
<g transform="translate(653 403.5)"><circle r="7" fill="url(#gf)"/><circle cx="-2.6" cy="-1.8" r="1.7" fill="#fff"/><circle cx="2.6" cy="-1.8" r="1.7" fill="#fff"/><circle cx="-2.6" cy="-1.6" r="0.9" fill="#6b3b2e"/><circle cx="2.6" cy="-1.6" r="0.9" fill="#6b3b2e"/>
<ellipse cx="-1.4" cy="2.6" rx="1" ry="0.8" fill="#6b3b2e"/><path d="M0.2 1 Q1.6 0 2.6 1.4 L3.2 6.8 Q1.6 8 0 6.8 Z" fill="#ffb338" stroke="#f08a2a" stroke-width="0.4"/></g>
<g transform="translate(653 426.5)"><circle r="7" fill="url(#gr)"/><path d="M-4.8 -3.2 L-0.8 -1.6 M4.8 -3.2 L0.8 -1.6" stroke="#4a1a20" stroke-width="1" stroke-linecap="round"/>
<circle cx="-2.6" cy="-0.4" r="1.5" fill="#fff"/><circle cx="2.6" cy="-0.4" r="1.5" fill="#fff"/><circle cx="-2.5" cy="-0.3" r="0.75" fill="#4a1a20"/><circle cx="2.5" cy="-0.3" r="0.75" fill="#4a1a20"/>
<path d="M-2.8 4.2 Q0 2 2.8 4.2" fill="none" stroke="#4a1a20" stroke-width="1" stroke-linecap="round"/></g>
<g transform="translate(653 449.5)"><path d="M-6.4 -6.6 L-3.2 -3.6 H3.2 L6.4 -6.6 V3.6 Q6.4 6.8 3.4 6.8 H-3.4 Q-6.4 6.8 -6.4 3.6 Z" fill="url(#gy)"/>
<path d="M-4 -0.6 Q-3 -1.8 -2 -0.6 M2 -0.6 Q3 -1.8 4 -0.6" fill="none" stroke="#6b3b2e" stroke-width="0.8" stroke-linecap="round"/><path d="M-1.8 2.2 Q0 5 1.8 2.2 Z" fill="#e83a5a"/></g>
<g transform="translate(653 472.5)"><circle cx="-5.9" cy="-0.6" r="1.7" fill="#b88a80"/><circle cx="5.9" cy="-0.6" r="1.7" fill="#b88a80"/><circle cy="-0.8" r="6" fill="#9a6e68"/>
<ellipse cx="0" cy="-2.2" rx="4.6" ry="3" fill="#e9b4a6"/><ellipse cx="0" cy="3.4" rx="2.6" ry="2" fill="#d89c8e"/>
<path d="M-7 7 Q-7 1.2 -4.2 -1.4 Q-2 -3 -0.6 -1.6 Q0 -0.4 -1.2 1.2 Q-3 3.6 -2.6 7 Z M7 7 Q7 1.2 4.2 -1.4 Q2 -3 0.6 -1.6 Q0 -0.4 1.2 1.2 Q3 3.6 2.6 7 Z" fill="url(#gm)"/></g>
<g transform="translate(653 495.5)"><path d="M0 6.4 C-3.2 4 -6.8 1.2 -6.8 -2.2 C-6.8 -4.8 -5 -6.4 -3.4 -6.4 C-1.8 -6.4 -0.6 -5.6 0 -4.4 C0.6 -5.6 1.8 -6.4 3.4 -6.4 C5 -6.4 6.8 -4.8 6.8 -2.2 C6.8 1.2 3.2 4 0 6.4 Z" fill="url(#gh)"/></g>
<g transform="translate(653 518.5)"><path d="M-5.8 -5.4 Q2 -7.4 5.6 -1.4 Q7.6 3 5 6 Q3.2 7.4 1 6.4" fill="none" stroke="#ffbf2e" stroke-width="1.8" stroke-linecap="round"/>
<path d="M-2.4 0.8 L-1.3 2.9 L1 3.2 L-0.7 4.8 L-0.2 7 L-2.4 5.9 L-4.5 7 L-4 4.8 L-5.7 3.2 L-3.4 2.9 Z" fill="#ffb02e"/></g>
<g transform="translate(653 541.5)"><g stroke="url(#gy)" stroke-width="2.3" stroke-linecap="round"><path d="M-2.6 1.6 L-4.2 -2.6 M-0.8 0.4 L-2.2 -4.6 M1.2 0 L0.6 -5.6 M3.2 0.4 L3.4 -4.4"/></g>
<path d="M-3.6 1 Q-4 -0.6 -2 -1.2 L4.2 -1 Q5.6 -0.4 6.2 -2.6 Q7.4 -2.4 7.2 0 Q7 3.4 5.6 5.6 Q3.6 7.6 0.4 7 Q-2.6 6.4 -3.6 1 Z" fill="#ffb02e"/>
<path d="M1.6 -7.4 Q3.8 -7.6 4.4 -5.4 M3.6 -8 Q5.8 -8 6 -5.8 M-7.6 0.2 Q-7.8 2.4 -5.8 3.4 M-8 2.4 Q-7.8 4.4 -5.6 4.8" fill="none" stroke="#3b8de0" stroke-width="0.85" stroke-linecap="round"/></g>
<g transform="translate(653 564.5)"><g stroke="#ffb834" stroke-width="2.1" stroke-linecap="round" fill="none"><path d="M-1.6 -0.6 L-2.6 -5.8 M0.8 -0.4 L1.2 -6.2 M3 0.6 L3.6 -4.8"/></g>
<path d="M-0.2 -1 Q4.2 -1.2 4 3 Q3.8 6.8 -0.6 6.8 Q-4.4 6.8 -4.4 3 Q-4.4 0.4 -1.8 -0.2 Z" fill="url(#gy)"/>
<circle cx="-1" cy="3.2" r="1.5" fill="#ffffff"/></g>
<g transform="translate(653 587.5)"><g stroke="#ffbf3a" stroke-width="2.3" stroke-linecap="round"><path d="M-1.2 0 L-3 -5.8 M1.4 0 L3 -5.8"/></g>
<path d="M-4 2.6 Q-4 -0.6 -1 -0.8 H2 Q4.6 -0.6 4.6 2.4 Q4.6 6.8 0.2 6.8 Q-4 6.8 -4 2.6 Z" fill="url(#gy)"/>
<path d="M-3.4 1.6 Q-1 0.4 2.6 2 Q3.6 2.6 3.8 3.6" stroke="#f29a28" stroke-width="0.7" fill="none"/></g>
<g transform="translate(653 610.5)"><path d="M-5.4 -5.6 Q-3.6 -6 -3.4 -4.4 L-2.6 0.4 Q-1.4 2.6 1 2.6 L3.4 2.6 Q6.2 3.2 6.6 6.8 H-3.6 Q-6.4 3 -6.2 -4.4 Q-6.2 -5.4 -5.4 -5.6Z" fill="url(#gs)"/>
<circle cx="-4.8" cy="-5.8" r="1.6" fill="#ffb12e"/>
<circle cx="1.6" cy="-1.6" r="3.7" fill="#ffb02e"/><path d="M-2.2 -2 Q-2.6 -6.8 1.6 -6.8 Q5.8 -6.8 5.4 -2.2 Q4.6 -4.4 1.6 -4.4 Q-1.2 -4.4 -2.2 -2Z" fill="#ffc83d"/>
<circle cx="0.3" cy="-1.4" r="0.5" fill="#6b3b2e"/><circle cx="2.9" cy="-1.4" r="0.5" fill="#6b3b2e"/></g>
<g transform="translate(653 633.5)"><path d="M-5.2 6.8 Q-5.2 2.4 -1.6 1.8 H2.2 Q5.4 2.4 5.4 6.8 Z" fill="url(#gs)"/>
<circle cx="0" cy="-2.4" r="4" fill="#ffb02e"/><path d="M-4 -2.6 Q-4.4 -7 0 -7.2 Q4 -7 4 -3.6 Q2 -5 -1 -4.6 Q-3 -4 -4 -2.6Z" fill="#ffc83d"/>
<path d="M0.2 1.8 Q-0.4 -1 1.2 -2.8 Q3 -3.6 3.6 -2 Q3.8 0.4 2.4 2.4 Z" fill="#ffa020"/></g>
<g transform="translate(653 656.5)"><path d="M-5 6.8 Q-5.2 1.8 -4.2 1 L-5.8 -1.6 L-4.6 -2.4 L-2.4 1 H2.4 L4.6 -2.4 L5.8 -1.6 L4.2 1 Q5.2 1.8 5 6.8 Z" fill="url(#gs)"/>
<circle cx="-6.2" cy="-1.6" r="1.4" fill="#ffb12e"/><circle cx="6.2" cy="-1.6" r="1.4" fill="#ffb12e"/>
<circle cx="0" cy="-3" r="3.6" fill="#ffb02e"/><path d="M-3.6 -3 Q-3.8 -7.2 0 -7.2 Q3.8 -7.2 3.6 -3 Q2.4 -5 0 -4.8 Q-2.4 -5 -3.6 -3Z" fill="#ffc83d"/>
<circle cx="-1.3" cy="-2.6" r="0.5" fill="#6b3b2e"/><circle cx="1.3" cy="-2.6" r="0.5" fill="#6b3b2e"/></g>
<rect x="897.5" y="529" width="47" height="167" rx="5" fill="#ffffff" opacity="0.4"/>
<text transform="translate(929.6 682.6) rotate(-90)" font-family='"Liberation Sans", sans-serif' font-size="25.4" fill="#a8d8bf"><tspan stroke="#a8d8bf" stroke-width="0.3" textLength="96" lengthAdjust="spacingAndGlyphs">Ablebits</tspan><tspan textLength="44" lengthAdjust="spacingAndGlyphs">.com</tspan></text>

</svg>
</body></html>
